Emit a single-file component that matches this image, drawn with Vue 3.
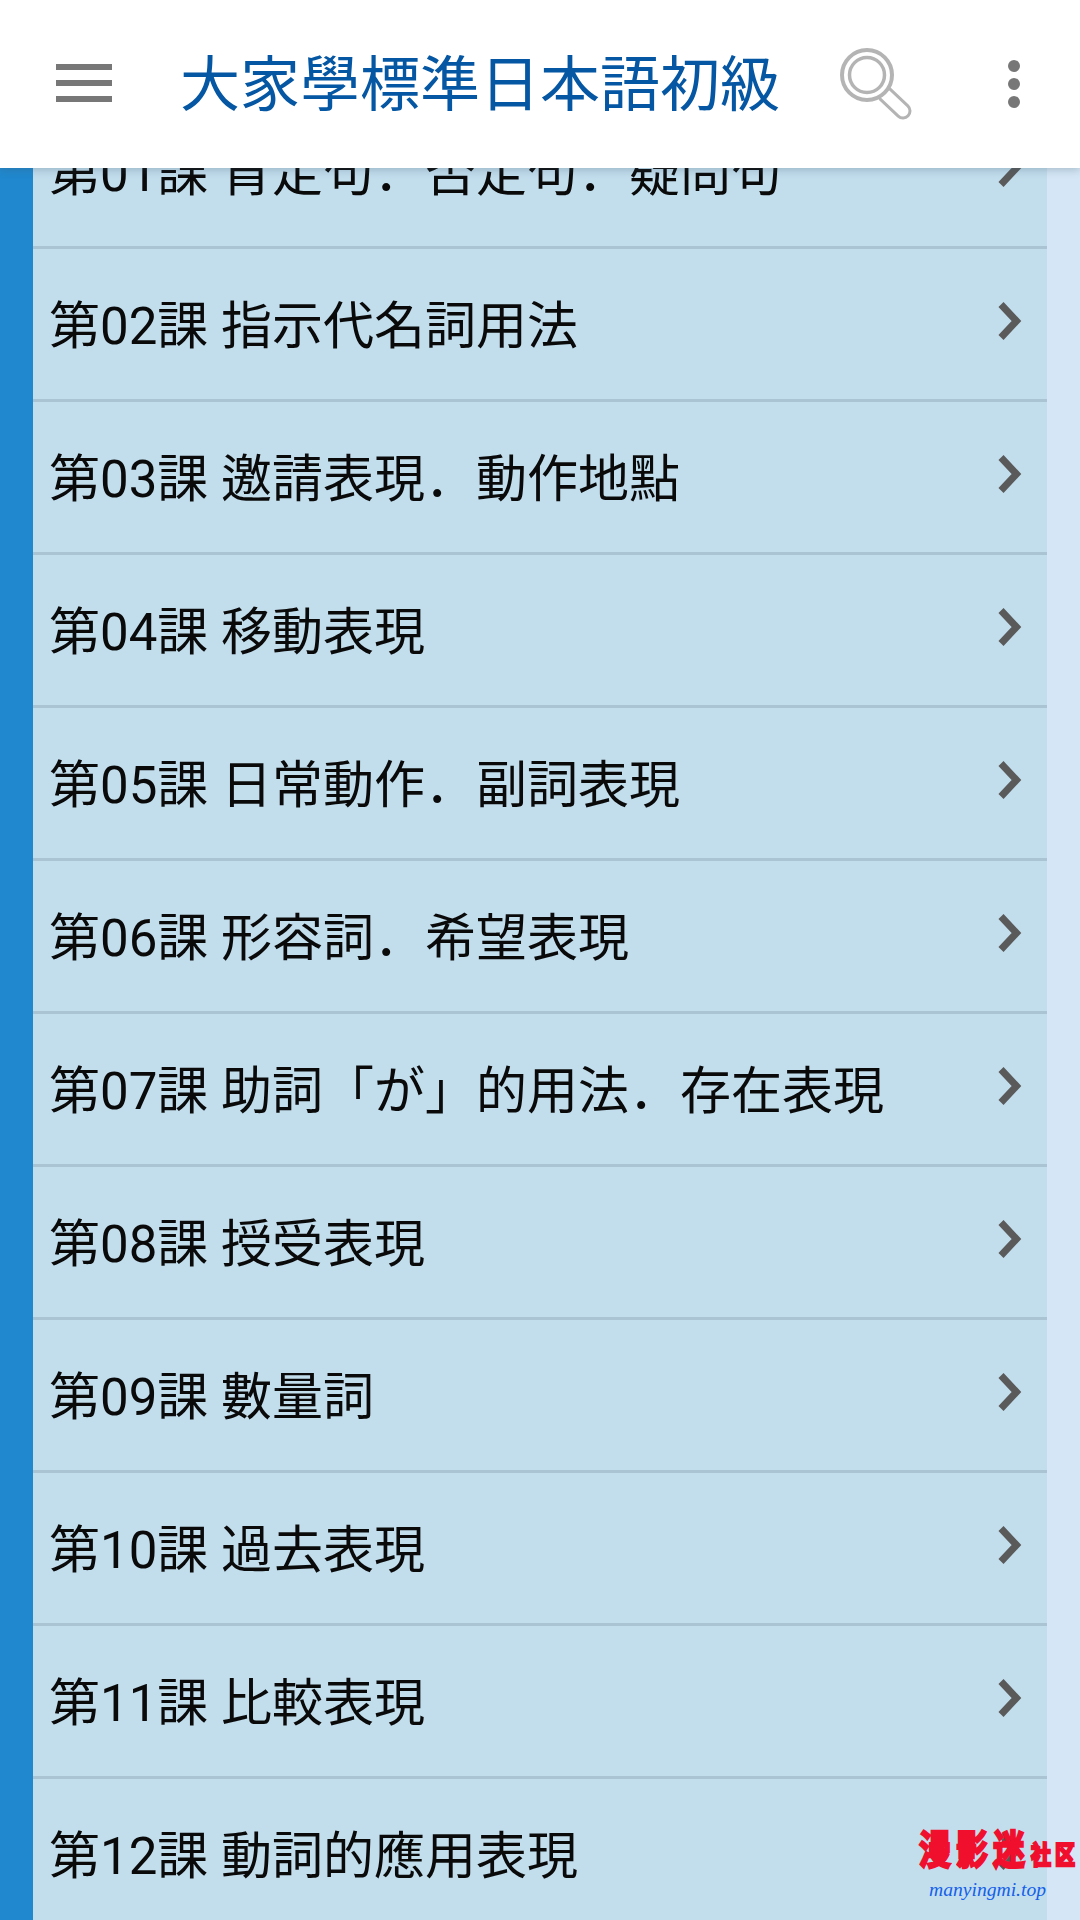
<template>
  <div class="page">
    <header class="topbar">
      <button class="topbar__menu" type="button" aria-label="menu">
        <span></span><span></span><span></span>
      </button>
      <h1 class="topbar__title">大家學標準日本語初級</h1>
      <svg class="topbar__search" width="72" height="72" viewBox="0 0 72 72" fill="none">
        <path d="M45 46 L63 63" stroke="#b4b4b4" stroke-width="17" stroke-linecap="round" />
        <path d="M45 46 L63 63" stroke="#fff" stroke-width="11" stroke-linecap="round" />
        <circle cx="27" cy="27" r="25" fill="#fff" stroke="#b4b4b4" stroke-width="4" />
        <circle cx="27" cy="27" r="17.5" stroke="#b4b4b4" stroke-width="3.5" />
      </svg>
      <div class="topbar__more">
        <i></i><i></i><i></i>
      </div>
    </header>

    <ul class="lessons">
      <li v-for="item in lessons" :key="item" class="lessons__row">
        <span class="lessons__text">{{ item }}</span>
        <svg class="lessons__arrow" width="24" height="38" viewBox="0 0 24 38" fill="none">
          <path d="M3 2.5 L18.5 19 L3 35.5" stroke="#5a5a5a" stroke-width="7" />
        </svg>
      </li>
    </ul>

    <div class="mark">
      <div class="mark__name">
        <span class="mark__big">漫</span><span class="mark__big">影</span><span class="mark__big">迷</span><span class="mark__small">社区</span>
      </div>
      <div class="mark__url">manyingmi.top</div>
    </div>
  </div>
</template>

<script setup>
  const lessons = [
    '第01課 肯定句．否定句．疑問句',
    '第02課 指示代名詞用法',
    '第03課 邀請表現．動作地點',
    '第04課 移動表現',
    '第05課 日常動作．副詞表現',
    '第06課 形容詞．希望表現',
    '第07課 助詞「が」的用法．存在表現',
    '第08課 授受表現',
    '第09課 數量詞',
    '第10課 過去表現',
    '第11課 比較表現',
    '第12課 動詞的應用表現'
  ]
</script>

<style>
  html,
  body {
    margin: 0;
    background: #d5e7f6;
  }
</style>

<style scoped>
  .page {
    position: relative;
    width: 1080px;
    height: 1920px;
    overflow: hidden;
    background: #d5e7f6;
    font-family: Roboto, "Noto Sans CJK JP", sans-serif;
  }

  .topbar {
    position: absolute;
    top: 0;
    left: 0;
    right: 0;
    z-index: 2;
    display: flex;
    align-items: center;
    height: 168px;
    background: #fff;
    box-shadow: 0 2px 8px rgba(60, 90, 110, 0.3);
  }

  .topbar__menu {
    display: flex;
    flex-direction: column;
    gap: 10px;
    width: 56px;
    margin: -2px 0 0 56px;
    padding: 0;
    border: none;
    background: none;
  }

  .topbar__menu span {
    display: block;
    height: 6px;
    background: #777;
  }

  .topbar__title {
    margin: 4px 0 0 68px;
    color: #0557a3;
    font-size: 60px;
    font-weight: 400;
    line-height: 1;
    white-space: nowrap;
  }

  .topbar__search {
    flex: none;
    margin: 0 0 0 60px;
  }

  .topbar__more {
    display: flex;
    flex-direction: column;
    gap: 6px;
    margin-left: 96px;
  }

  .topbar__more i {
    display: block;
    width: 12px;
    height: 12px;
    border-radius: 50%;
    background: #777;
  }

  .lessons {
    margin: 0 33px;
    padding: 96px 0 0;
    list-style: none;
    background: #c2deed;
    box-shadow: -33px 0 0 #2088ce;
  }

  .lessons__row {
    display: flex;
    align-items: center;
    justify-content: space-between;
    box-sizing: border-box;
    height: 153px;
    padding: 0 25px 0 16px;
    border-bottom: 3px solid #aac4d4;
  }

  .lessons__text {
    margin-top: -5px;
    color: #0a0a0a;
    font-size: 51px;
    white-space: nowrap;
  }

  .lessons__arrow {
    flex: none;
    margin-top: -6px;
  }

  .mark {
    position: absolute;
    z-index: 1;
    left: 919px;
    top: 1834px;
  }

  .mark__name {
    display: flex;
    align-items: flex-end;
    color: #f0102e;
    font-family: "Noto Sans CJK SC", sans-serif;
    font-weight: 700;
    line-height: 1;
    -webkit-text-stroke: 2px #f0102e;
  }

  .mark__big {
    width: 37px;
    font-size: 32px;
    transform: scaleY(1.25);
    transform-origin: bottom;
  }

  .mark__small {
    margin-left: 1px;
    font-size: 20px;
    letter-spacing: 4px;
    white-space: nowrap;
    transform: scaleY(1.25);
    transform-origin: bottom;
  }

  .mark__url {
    margin: 13px 0 0 10px;
    color: #1560e8;
    font-family: "Liberation Serif", serif;
    font-size: 19.6px;
    font-style: italic;
    line-height: 1.1;
  }
</style>
